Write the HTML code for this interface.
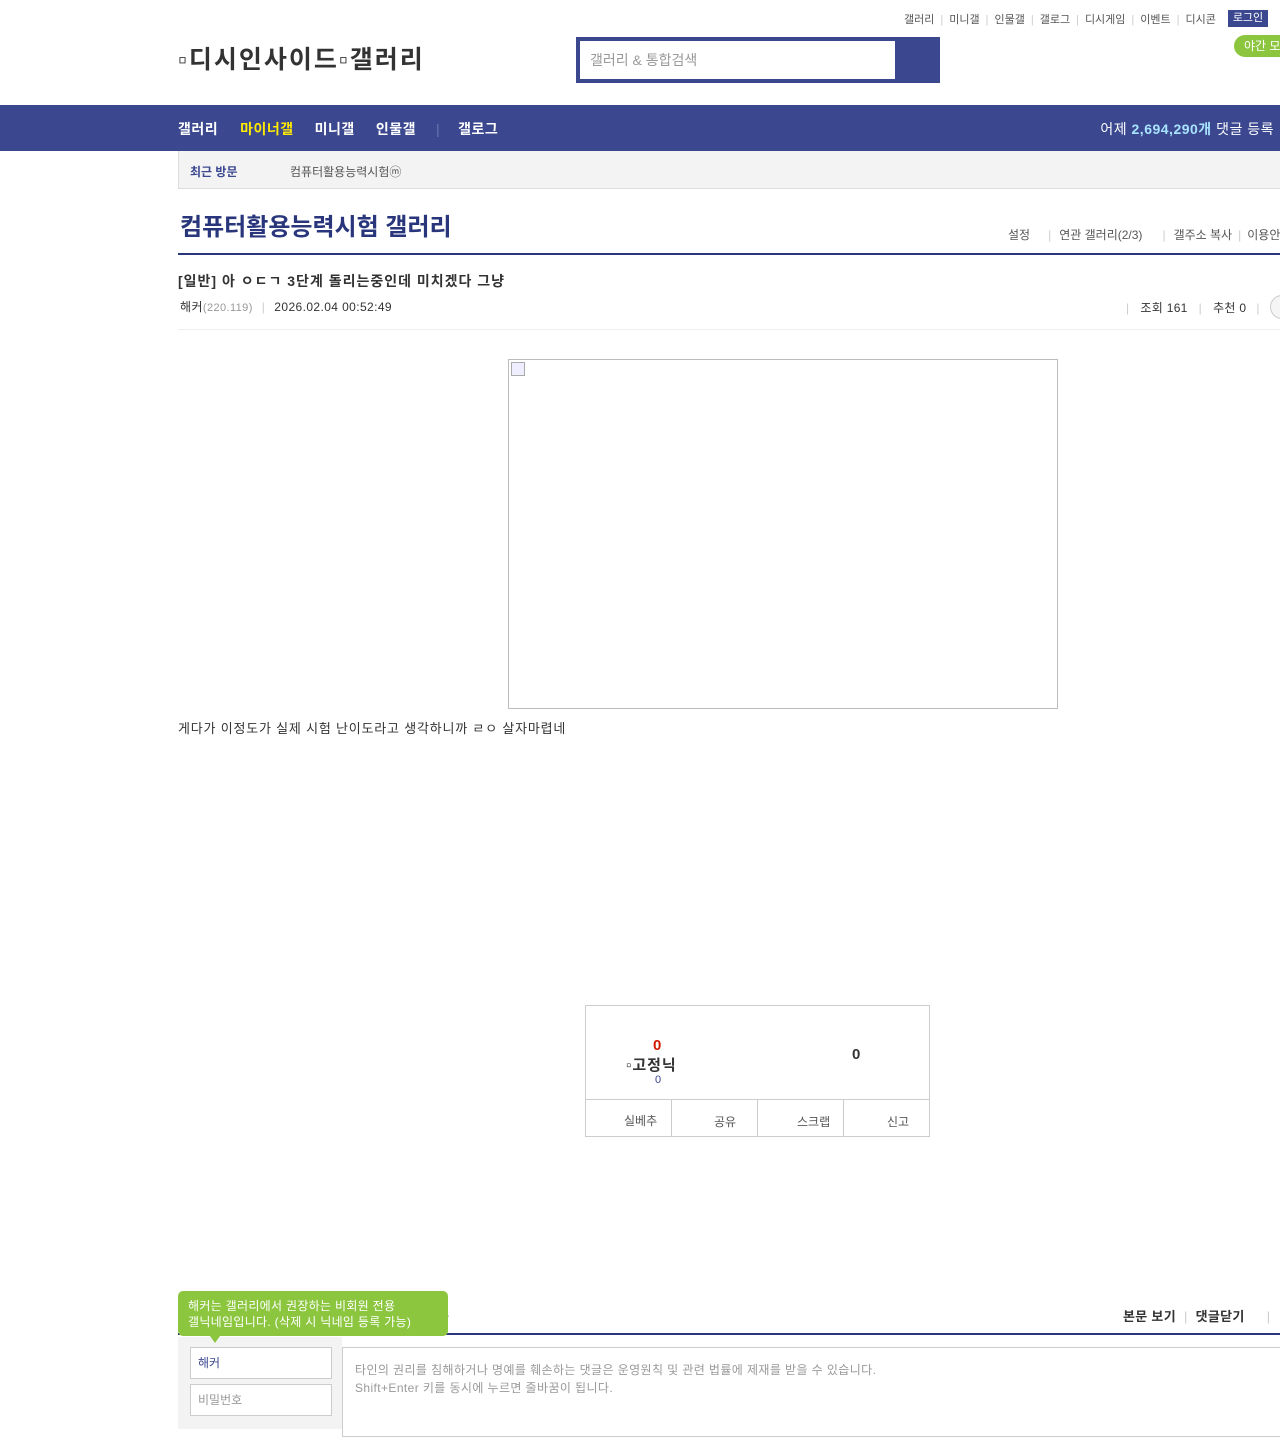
<!DOCTYPE html>
<html><head><meta charset="utf-8"><style>
*{margin:0;padding:0;box-sizing:border-box}
body{width:1280px;height:1429px;overflow:hidden;background:#fff;font-family:"Liberation Sans","Noto Sans CJK KR",sans-serif;color:#333;position:relative}
.a{position:absolute;white-space:nowrap}
.top{font-size:11px;color:#555;top:11px}
.top span.s{color:#ccc;margin:0 6px}
</style></head><body>
<div class="a top" style="left:904px">갤러리<span class="s">|</span>미니갤<span class="s">|</span>인물갤<span class="s">|</span>갤로그<span class="s">|</span>디시게임<span class="s">|</span>이벤트<span class="s">|</span>디시콘</div>
<div class="a" style="left:1228px;top:10px;width:40px;height:17px;background:#3b4890;color:#fff;font-size:11px;text-align:center;line-height:17px">로그인</div>
<div class="a" style="left:1234px;top:35px;width:60px;height:22px;background:#8cc63f;color:#fff;font-size:12px;line-height:22px;padding-left:10px;border-radius:11px">야간 모드</div>
<div class="a" style="left:178px;top:40px;font-size:25px;font-weight:bold;color:#333;letter-spacing:2px">▫디시인사이드▫갤러리</div>
<div class="a" style="left:576px;top:37px;width:364px;height:46px;background:#3b4890"></div>
<div class="a" style="left:580px;top:41px;width:315px;height:38px;background:#fff;font-size:14px;color:#999;line-height:38px;padding-left:10px">갤러리 &amp; 통합검색</div>
<div class="a" style="left:0;top:105px;width:1280px;height:46px;background:#3b4890"></div>
<div class="a" style="left:178px;top:119px;font-size:14px;font-weight:bold;color:#fff;letter-spacing:0.5px">갤러리<span style="color:#ffea00;margin-left:22px">마이너갤</span><span style="margin-left:21px">미니갤</span><span style="margin-left:21px">인물갤</span><span style="color:#6a75b0;margin:0 18px 0 20px;font-weight:normal">|</span>갤로그</div>
<div class="a" style="right:6px;top:119px;font-size:14px;color:#fff;letter-spacing:0.5px">어제 <b style="color:#a8e3ff">2,694,290개</b> 댓글 등록</div>
<div class="a" style="left:178px;top:151px;width:1102px;height:38px;background:#f3f3f3;border:1px solid #ddd;border-top:0;border-right:0"></div>
<div class="a" style="left:190px;top:163px;font-size:12px;font-weight:bold;color:#3b4890">최근 방문</div>
<div class="a" style="left:290px;top:163px;font-size:12px;color:#555">컴퓨터활용능력시험ⓜ</div>
<div class="a" style="left:180px;top:207px;font-size:24px;font-weight:bold;color:#29367c">컴퓨터활용능력시험 갤러리</div>
<div class="a" style="left:1008px;top:226px;font-size:12px;color:#555">설정<span style="color:#ccc;margin:0 8px 0 18px">|</span>연관 갤러리(2/3)<span style="color:#ccc;margin:0 8px 0 20px">|</span>갤주소 복사<span style="color:#ccc;margin:0 6px">|</span>이용안내</div>
<div class="a" style="left:178px;top:253px;width:1102px;height:2px;background:#29367c"></div>
<div class="a" style="left:178px;top:271px;font-size:14px;font-weight:bold;color:#333;letter-spacing:1px">[일반] 아 ㅇㄷㄱ 3단계 돌리는중인데 미치겠다 그냥</div>
<div class="a" style="left:180px;top:298px;font-size:12px;color:#333;letter-spacing:0.4px">해커<span style="color:#999;font-size:11px">(220.119)</span><span style="color:#ccc;margin:0 9px">|</span>2026.02.04 00:52:49</div>
<div class="a" style="left:1126px;top:299px;font-size:12px;color:#333;letter-spacing:0.3px"><span style="color:#ccc;margin-right:11px">|</span>조회 161<span style="color:#ccc;margin:0 11px">|</span>추천 0<span style="color:#ccc;margin:0 10px">|</span></div>
<div class="a" style="left:1270px;top:295px;width:24px;height:24px;border:1px solid #ccc;border-radius:12px;background:#f5f5f5"></div>
<div class="a" style="left:178px;top:329px;width:1102px;height:1px;background:#eee"></div>
<div class="a" style="left:508px;top:359px;width:550px;height:350px;border:1px solid #bbb"></div>
<div class="a" style="left:511px;top:362px;width:14px;height:14px;border:1px solid #aaa;background:#eef"></div>
<div class="a" style="left:178px;top:718px;font-size:13px;color:#333;letter-spacing:0.8px">게다가 이정도가 실제 시험 난이도라고 생각하니까 ㄹㅇ 살자마렵네</div>
<div class="a" style="left:585px;top:1005px;width:345px;height:132px;border:1px solid #ccc"></div>
<div class="a" style="left:585px;top:1099px;width:345px;height:1px;background:#ccc"></div>
<div class="a" style="left:671px;top:1100px;width:1px;height:36px;background:#ccc"></div>
<div class="a" style="left:757px;top:1100px;width:1px;height:36px;background:#ccc"></div>
<div class="a" style="left:843px;top:1100px;width:1px;height:36px;background:#ccc"></div>
<div class="a" style="left:653px;top:1037px;font-size:15px;font-weight:bold;color:#d31900">0</div>
<div class="a" style="left:626px;top:1054px;font-size:15px;font-weight:bold;color:#333;letter-spacing:1px">▫고정닉</div>
<div class="a" style="left:655px;top:1074px;font-size:11px;color:#3b4890">0</div>
<div class="a" style="left:852px;top:1046px;font-size:15px;font-weight:bold;color:#333">0</div>
<div class="a" style="left:624px;top:1112px;font-size:12px;color:#555">실베추</div>
<div class="a" style="left:714px;top:1113px;font-size:12px;color:#555">공유</div>
<div class="a" style="left:797px;top:1113px;font-size:12px;color:#555">스크랩</div>
<div class="a" style="left:887px;top:1113px;font-size:12px;color:#555">신고</div>
<div class="a" style="left:436px;top:1306px;font-size:14px;font-weight:bold">순</div>
<div class="a" style="left:1123px;top:1306px;font-size:13px;font-weight:bold;color:#333;letter-spacing:0.3px">본문 보기<span style="color:#ccc;margin:0 8px;font-weight:normal">|</span>댓글닫기<span style="color:#ccc;margin-left:22px;font-weight:normal">|</span></div>
<div class="a" style="left:178px;top:1333px;width:1102px;height:2px;background:#29367c"></div>
<div class="a" style="left:178px;top:1337px;width:164px;height:92px;background:#f3f3f3"></div>
<div class="a" style="left:178px;top:1291px;width:270px;height:45px;background:#8cc63f;border-radius:5px;color:#fff;font-size:12px;line-height:16px;padding:7px 10px;letter-spacing:0.3px">해커는 갤러리에서 권장하는 비회원 전용<br>갤닉네임입니다. (삭제 시 닉네임 등록 가능)</div>
<div class="a" style="left:210px;top:1336px;width:0;height:0;border-left:5px solid transparent;border-right:5px solid transparent;border-top:7px solid #8cc63f"></div>
<div class="a" style="left:190px;top:1347px;width:142px;height:32px;background:#fff;border:1px solid #ccc;font-size:12px;color:#3b4890;line-height:30px;padding-left:7px">해커</div>
<div class="a" style="left:190px;top:1384px;width:142px;height:32px;background:#fff;border:1px solid #ccc;font-size:12px;color:#999;line-height:30px;padding-left:7px">비밀번호</div>
<div class="a" style="left:342px;top:1347px;width:950px;height:90px;border:1px solid #ccc;font-size:12px;color:#999;line-height:18px;padding:13px 12px;letter-spacing:0.4px">타인의 권리를 침해하거나 명예를 훼손하는 댓글은 운영원칙 및 관련 법률에 제재를 받을 수 있습니다.<br>Shift+Enter 키를 동시에 누르면 줄바꿈이 됩니다.</div>
</body></html>
